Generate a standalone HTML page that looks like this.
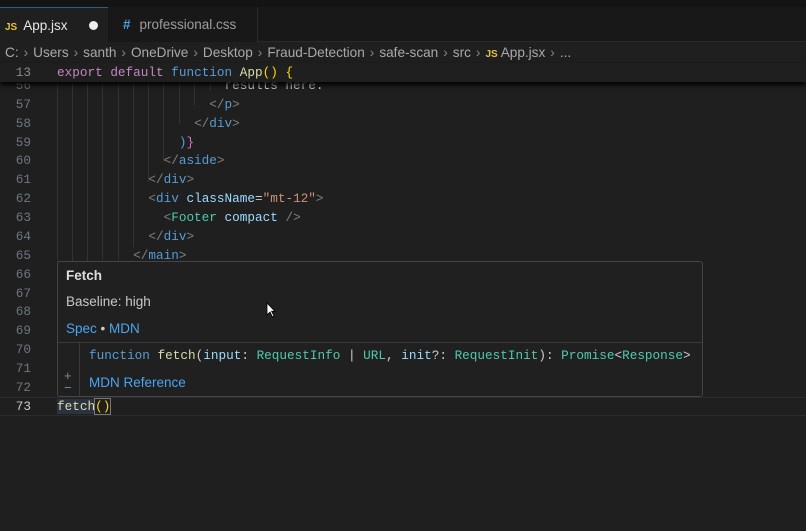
<!DOCTYPE html>
<html><head><meta charset="utf-8"><style>
*{margin:0;padding:0;box-sizing:border-box}
body{width:806px;height:531px;background:#1f1f1f;overflow:hidden;position:relative;font-family:"Liberation Sans",sans-serif}
.tabs{position:absolute;left:0;top:0;width:806px;height:42px;background:#181818;border-bottom:1px solid #2a2a2a}
.topline{position:absolute;left:0;top:0;width:806px;height:7px;background:#141414}
.tab{position:absolute;top:7px;height:35px;font-size:13.5px;line-height:35px;color:#ccc}
.t1{left:0;width:108px;background:#1f1f1f;border-top:1px solid #2a5d8a}
.t2{left:108px;width:150px;background:#181818;border-right:1px solid #2a2a2a;color:#9d9d9d}
.crumb{position:absolute;left:0;top:43px;height:20px;font-size:13.6px;color:#a9a9a9;line-height:20px;white-space:nowrap;padding-left:5px}
.crumb .s{color:#888;margin:0 5px}
.ln{position:absolute;left:0;width:31px;text-align:right;font-family:"Liberation Mono",monospace;font-size:12.7px;color:#6e7681;line-height:19px}
.code{position:absolute;left:57px;font-family:"Liberation Mono",monospace;font-size:12.7px;line-height:19px;white-space:pre;color:#ccc}
.g{position:absolute;top:82px;height:180px;width:1px;background:#333}
.tg{color:#808080}.tn{color:#569cd6}.at{color:#9cdcfe}.st{color:#ce9178}.cm{color:#4ec9b0}
.kw{color:#c586c0}.fn{color:#dcdcaa}.bl{color:#569cd6}.br{color:#ffd700}.pk{color:#da70d6}.ty{color:#4ec9b0}
.sticky{position:absolute;left:0;top:63px;width:806px;height:19px;background:#1f1f1f;box-shadow:0 3px 5px #000;z-index:3}
.hover{position:absolute;left:57px;top:261px;width:646px;height:136px;background:#202020;border:1px solid #454545;border-radius:3px;z-index:5}
.hover .a{position:absolute;left:8px;font-size:13.5px}
.link{color:#4aa5f0}
</style></head><body>
<div class="tabs"><div class="topline"></div>
<div class="tab t1"><span style="color:#e8c23a;font-size:10px;font-weight:bold;margin-left:5px">JS</span><span style="margin-left:6px;color:#e6e6e6">App.jsx</span><span style="position:absolute;left:89px;top:13px;width:9px;height:9px;border-radius:50%;background:#eee"></span></div>
<div class="tab t2"><span style="color:#4b9fe0;margin-left:15px;font-weight:bold">#</span><span style="margin-left:9px">professional.css</span></div>
</div>
<div class="crumb">C:<span class="s">›</span>Users<span class="s">›</span>santh<span class="s">›</span>OneDrive<span class="s">›</span>Desktop<span class="s">›</span>Fraud-Detection<span class="s">›</span>safe-scan<span class="s">›</span>src<span class="s">›</span><span style="color:#e8c23a;font-size:10px;font-weight:bold">JS</span> App.jsx<span class="s">›</span>...</div>
<div class="sticky"><div class="ln" style="top:0;color:#8a8a8a">13</div><div class="code" style="top:0"><span class="kw">export</span> <span class="kw">default</span> <span class="bl">function</span> <span class="fn">App</span><span class="br">()</span> <span class="br">{</span></div></div>

<div class="g" style="left:57px"></div><div class="g" style="left:72px"></div><div class="g" style="left:87px"></div><div class="g" style="left:102px"></div><div class="g" style="left:118px"></div><div class="g" style="left:133px;height:165px"></div>
<div class="g" style="left:148px;height:100px"></div><div class="g" style="left:163px;height:80px"></div><div class="g" style="left:179px;height:42px"></div><div class="g" style="left:194px;height:23px"></div><div class="g" style="left:210px;height:8px"></div>

<div class="ln" style="top:76px">56</div><div class="code" style="top:76px">                      results here.</div>
<div class="ln" style="top:95px">57</div><div class="code" style="top:95px">                    <span class="tg">&lt;/</span><span class="tn">p</span><span class="tg">&gt;</span></div>
<div class="ln" style="top:114px">58</div><div class="code" style="top:114px">                  <span class="tg">&lt;/</span><span class="tn">div</span><span class="tg">&gt;</span></div>
<div class="ln" style="top:133px">59</div><div class="code" style="top:133px">                <span class="bl">)</span><span class="pk">}</span></div>
<div class="ln" style="top:151px">60</div><div class="code" style="top:151px">              <span class="tg">&lt;/</span><span class="tn">aside</span><span class="tg">&gt;</span></div>
<div class="ln" style="top:170px">61</div><div class="code" style="top:170px">            <span class="tg">&lt;/</span><span class="tn">div</span><span class="tg">&gt;</span></div>
<div class="ln" style="top:189px">62</div><div class="code" style="top:189px">            <span class="tg">&lt;</span><span class="tn">div</span> <span class="at">className</span>=<span class="st">"mt-12"</span><span class="tg">&gt;</span></div>
<div class="ln" style="top:208px">63</div><div class="code" style="top:208px">              <span class="tg">&lt;</span><span class="cm">Footer</span> <span class="at">compact</span> <span class="tg">/&gt;</span></div>
<div class="ln" style="top:227px">64</div><div class="code" style="top:227px">            <span class="tg">&lt;/</span><span class="tn">div</span><span class="tg">&gt;</span></div>
<div class="ln" style="top:246px">65</div><div class="code" style="top:246px">          <span class="tg">&lt;/</span><span class="tn">main</span><span class="tg">&gt;</span></div>
<div class="ln" style="top:265px">66</div><div class="ln" style="top:284px">67</div><div class="ln" style="top:302px">68</div><div class="ln" style="top:321px">69</div><div class="ln" style="top:340px">70</div><div class="ln" style="top:359px">71</div><div class="ln" style="top:378px">72</div>
<div style="position:absolute;left:0;top:397px;width:806px;height:19px;border-top:1px solid #2c2c2c;border-bottom:1px solid #2c2c2c"></div>
<div class="ln" style="top:397px;color:#ccc">73</div><div class="code" style="top:397px"><span class="fn" style="background:#2a3340">fetch</span><span class="br" style="outline:1px solid #777">()</span></div>

<div class="hover">
<div class="a" style="top:6px;color:#ddd;font-weight:bold">Fetch</div>
<div class="a" style="top:32px;color:#c8c8c8">Baseline: high</div>
<div class="a" style="top:59px"><span class="link">Spec</span> <span style="color:#ccc">•</span> <span class="link">MDN</span></div>
<div style="position:absolute;left:0;top:80px;width:644px;height:1px;background:#3a3a3a"></div>
<div style="position:absolute;left:21px;top:81px;width:1px;height:54px;background:#3a3a3a"></div>
<div class="code" style="left:31px;top:84px"><span class="bl">function</span> <span class="fn">fetch</span>(<span class="at">input</span>: <span class="ty">RequestInfo</span> | <span class="ty">URL</span>, <span class="at">init</span>?: <span class="ty">RequestInit</span>): <span class="ty">Promise</span>&lt;<span class="ty">Response</span>&gt;</div>
<div style="position:absolute;left:6px;top:108px;color:#888;font-size:13px;line-height:12px">+<br>−</div>
<div class="a link" style="left:31px;top:113px">MDN Reference</div>
</div>
<svg style="position:absolute;left:266px;top:302px;z-index:6" width="10" height="16" viewBox="0 0 10 16"><path d="M1 1 L1 13 L4 10 L6.5 15 L8 14 L5.6 9.3 L9 9.3 Z" fill="#fff" stroke="#000" stroke-width="0.8"/></svg>
</body></html>
